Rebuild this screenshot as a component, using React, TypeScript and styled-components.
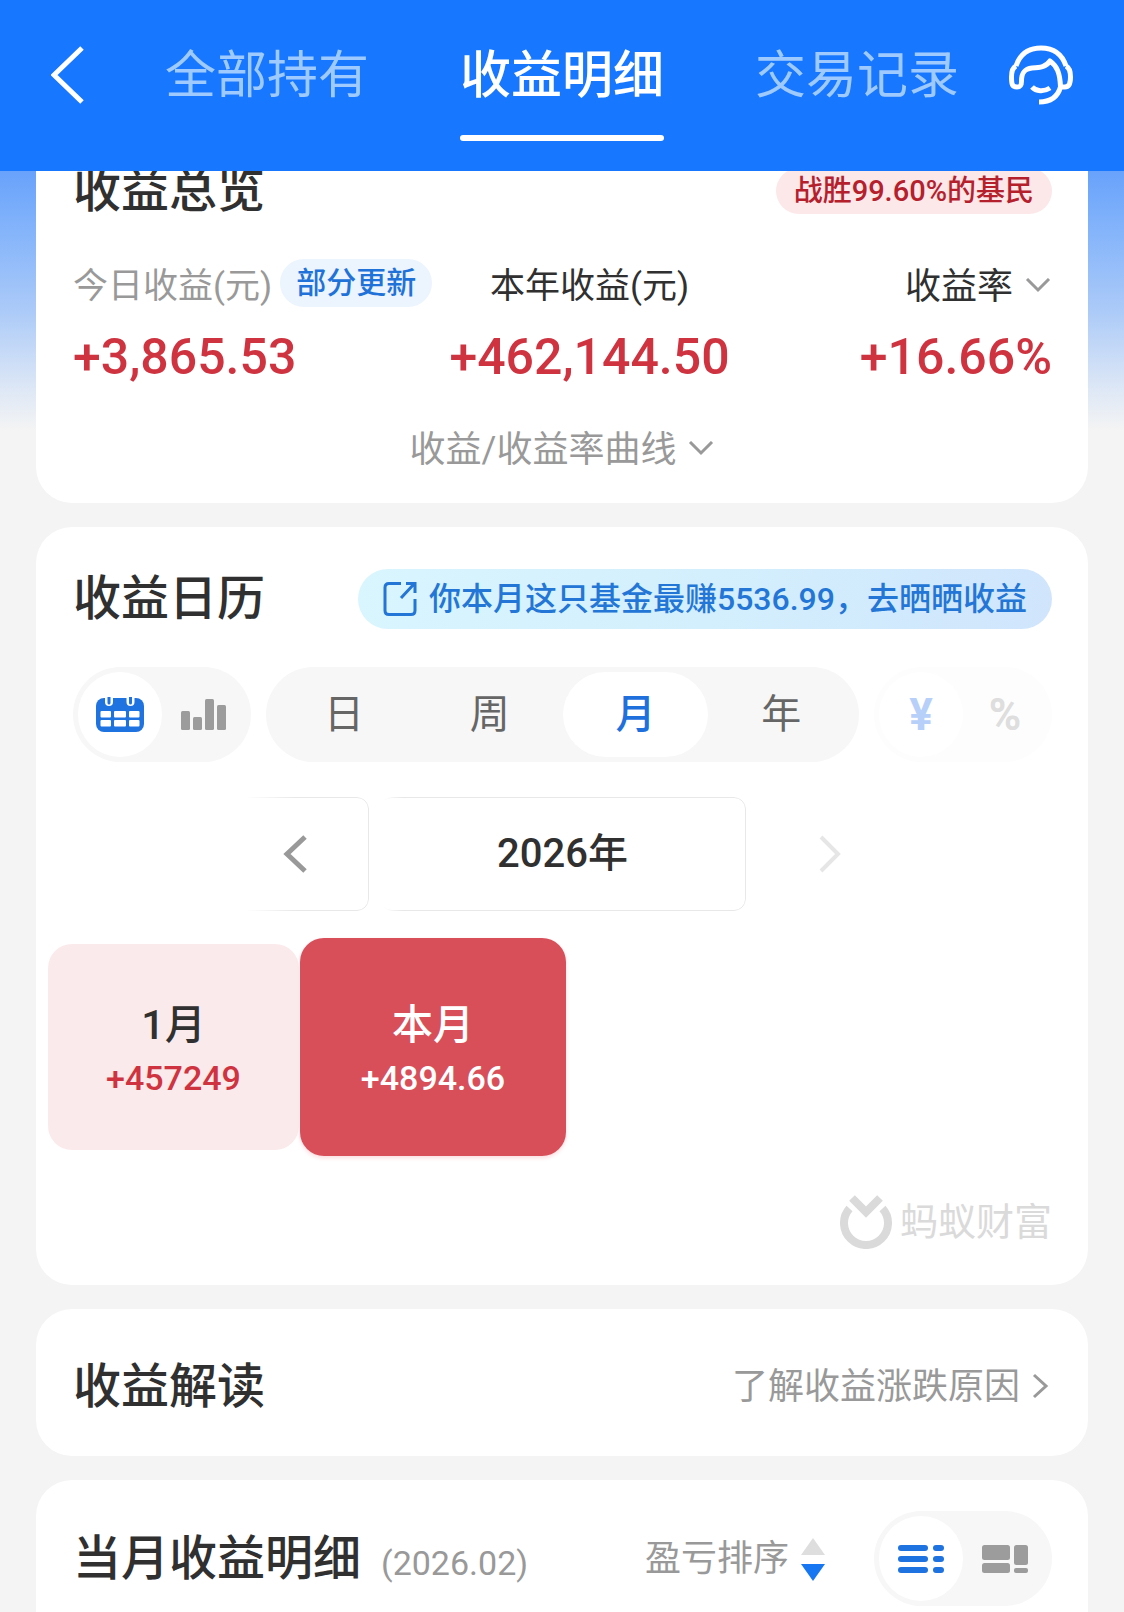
import React, { useState } from "react";
import styled, { createGlobalStyle, css } from "styled-components";

const GlobalStyle = createGlobalStyle`
  *, *::before, *::after { box-sizing: border-box; }
  body {
    margin: 0;
    background: #f4f4f4;
    color: #303030;
    font-family: Roboto, "Noto Sans CJK SC", sans-serif;
  }
  h2, p { margin: 0; }
  button {
    margin: 0;
    padding: 0;
    border: 0;
    background: none;
    color: inherit;
    font: inherit;
    cursor: pointer;
  }
  svg { display: block; flex: none; }
`;

const Page = styled.div`
  display: flex;
  flex-direction: column;
  min-height: 100vh;
  background: linear-gradient(
    to bottom,
    #68a2fb 171px,
    #7fb1fb 220px,
    #abcaf8 310px,
    #dbe6f6 385px,
    #f4f4f4 430px
  );
`;

const Header = styled.header`
  position: sticky;
  top: 0;
  z-index: 1;
  display: flex;
  justify-content: space-between;
  padding: 40px 51px 30px;
  background: #1777ff;
  color: #fff;
`;

const HeaderButton = styled.button`
  display: flex;
  align-items: center;
  width: 64px;
  height: 70px;
`;

const Tabs = styled.nav`
  display: flex;
  gap: 91px;
`;

const Tab = styled.button<{ $active: boolean }>`
  padding-bottom: 23px;
  border-bottom: 6px solid transparent;
  color: #9fcaff;
  font-size: 51px;
  line-height: 72px;
  white-space: nowrap;

  ${({ $active }) =>
    $active &&
    css`
      color: #fff;
      font-weight: 500;

      &::after {
        content: "";
        display: block;
        height: 6px;
        margin: 23px 0 -29px;
        border-radius: 3px;
        background: #fff;
      }
    `}
`;

const Main = styled.main`
  display: flex;
  flex: 1;
  flex-direction: column;
  gap: 24px;
  margin-top: -52px;
  padding: 0 36px;
`;

const Card = styled.section`
  padding: 42px 36px 29px 37px;
  border-radius: 36px;
  background: #fff;
`;

const CalendarCard = styled(Card)`
  padding-bottom: 36px;
`;

const InsightCard = styled(Card)`
  padding-top: 48px;
  padding-bottom: 39px;
`;

const DetailCard = styled(Card)`
  flex: 1;
  padding-top: 31px;
  padding-bottom: 0;
  border-radius: 36px 36px 0 0;
`;

const Row = styled.div`
  display: flex;
  align-items: center;
  justify-content: space-between;
`;

const Title = styled.h2`
  font-size: 48px;
  font-weight: 500;
  line-height: 60px;
  white-space: nowrap;
`;

const BeatBadge = styled.span`
  padding: 0 18px;
  border-radius: 23px;
  background: #fce7e9;
  color: #b5202d;
  font-size: 29px;
  font-weight: 500;
  line-height: 46px;
  white-space: nowrap;
`;

const Stats = styled.div`
  display: grid;
  grid-template-columns: 364fr 304fr 310fr;
  margin-top: 38px;
`;

const Stat = styled.div<{ $align: string }>`
  display: flex;
  flex-direction: column;
  align-items: ${({ $align }) => $align};
  gap: 14px;
`;

const StatHead = styled.div`
  display: flex;
  align-items: flex-start;
  gap: 8px;
  height: 54px;
`;

const StatLabel = styled.span<{ $muted?: boolean }>`
  color: ${({ $muted }) => ($muted ? "#999" : "#303030")};
  font-size: 35px;
  line-height: 56px;
  white-space: nowrap;
`;

const UpdateBadge = styled.span`
  padding: 0 16px;
  border-radius: 24px;
  background: #ecf4fe;
  color: #2172d8;
  font-size: 30px;
  font-weight: 500;
  line-height: 48px;
  white-space: nowrap;
`;

const StatValue = styled.p`
  color: #cf3340;
  font-size: 50px;
  font-weight: 500;
  line-height: 60px;
`;

const TextButton = styled.button`
  display: flex;
  align-items: center;
  gap: 12px;
  color: #999;
  font-size: 36px;
  line-height: 48px;
  white-space: nowrap;
`;

const RateButton = styled(TextButton)`
  color: #303030;
  line-height: 56px;
`;

const CurveButton = styled(TextButton)`
  margin: 39px auto 0;
`;

const ShareButton = styled.button`
  display: flex;
  align-items: center;
  gap: 12px;
  height: 60px;
  padding: 0 25px;
  border-radius: 30px;
  background: linear-gradient(100deg, #d9f5fe, #d3effd 50%, #d0e5fc);
  color: #2376d6;
  font-size: 32px;
  font-weight: 500;
  line-height: 60px;
  white-space: nowrap;
`;

const Controls = styled.div`
  display: flex;
  gap: 15px;
  margin-top: 38px;
`;

const Segment = styled.div<{ $grow?: boolean; $faded?: boolean }>`
  display: flex;
  flex: ${({ $grow }) => ($grow ? "1" : "0 0 178px")};
  height: 95px;
  padding: 5px;
  border-radius: 48px;
  background: ${({ $faded }) => ($faded ? "#fdfdfd" : "#f7f7f7")};
`;

const SegmentItem = styled.button<{ $active: boolean }>`
  display: flex;
  flex: 1;
  align-items: center;
  justify-content: center;
  border-radius: 43px;
  background: ${({ $active }) => ($active ? "#fff" : "transparent")};
  color: ${({ $active }) => ($active ? "#1f70dc" : "#666")};
  font-size: 40px;
  font-weight: ${({ $active }) => ($active ? 500 : 400)};
  line-height: 56px;

  & > svg {
    color: ${({ $active }) => ($active ? "#1f73e0" : "#9c9c9c")};
  }
`;

const UnitItem = styled(SegmentItem)`
  color: ${({ $active }) => ($active ? "#b7d0fa" : "#dedede")};
  font-size: 44px;
  font-weight: 700;
`;

const YearNav = styled.div`
  display: flex;
  justify-content: center;
  gap: 11px;
  margin-top: 35px;
`;

const YearBox = styled.div<{ $width: number; $fade?: string }>`
  position: relative;
  display: flex;
  width: ${({ $width }) => $width}px;
  height: 114px;

  &::before {
    content: "";
    position: absolute;
    inset: 0;
    display: ${({ $fade }) => ($fade ? "block" : "none")};
    border: 1px solid #e8e8e8;
    border-radius: 12px;
    mask-image: linear-gradient(to right, ${({ $fade }) => $fade});
    pointer-events: none;
  }
`;

const YearButton = styled.button`
  display: flex;
  flex: 1;
  align-items: center;
  justify-content: center;
  color: #303030;
  font-size: 40px;
  font-weight: 500;
  line-height: 56px;

  &:disabled { cursor: default; }
`;

const Months = styled.div`
  display: grid;
  grid-template-columns: repeat(4, 1fr);
  margin: 27px -30px 0 -31px;
`;

const Month = styled.button<{ $active: boolean }>`
  display: flex;
  flex-direction: column;
  align-items: center;
  justify-content: center;
  height: ${({ $active }) => ($active ? 218 : 206)}px;
  margin: ${({ $active }) => ($active ? "0 -4px 0 -2px" : "6px 3px 6px 6px")};
  padding-top: 4px;
  border-radius: 24px;
  background: ${({ $active }) => ($active ? "#d84f5a" : "#fbeaeb")};
  box-shadow: ${({ $active }) => ($active ? "0 2px 4px #fbdcdf" : "none")};
  color: ${({ $active }) => ($active ? "#fff" : "#303030")};
`;

const MonthName = styled.span`
  font-size: 41px;
  font-weight: 500;
  line-height: 58px;
`;

const MonthAmount = styled.span<{ $active: boolean }>`
  color: ${({ $active }) => ($active ? "#fff" : "#cf3340")};
  font-size: 34px;
  font-weight: 500;
  line-height: 48px;
`;

const Brand = styled.div`
  display: flex;
  align-items: center;
  justify-content: flex-end;
  gap: 8px;
  margin-top: 39px;
  color: #dadada;
  font-size: 38px;
  line-height: 54px;
`;

const DetailRow = styled.div`
  display: flex;
  align-items: center;
`;

const DetailHeading = styled.div`
  display: flex;
  align-items: baseline;
  gap: 20px;
  margin-right: auto;
`;

const Period = styled.span`
  color: #999;
  font-size: 34px;
  line-height: 48px;
`;

const SortButton = styled(TextButton)`
  margin-right: 49px;
`;

const chevrons = {
  down: { w: 27, h: 18, d: "M2 1 L13 12 L24 1" },
  left: { w: 26, h: 38, d: "M22 2 L4 19 L22 36" },
  right: { w: 24, h: 38, d: "M3 2 L20 19 L3 36" },
  back: { w: 34, h: 58, d: "M31 2 L3 29 L31 56" },
  more: { w: 20, h: 28, d: "M2 2 L14 13 L2 24" },
};

function Chevron({ kind, color, stroke = 3 }: { kind: keyof typeof chevrons; color: string; stroke?: number }) {
  const { w, h, d } = chevrons[kind];
  return (
    <svg width={w} height={h} viewBox={`0 0 ${w} ${h}`} fill="none" stroke={color} strokeWidth={stroke} aria-hidden="true">
      <path d={d} />
    </svg>
  );
}

function HeadsetIcon() {
  return (
    <svg width="64" height="60" viewBox="0 0 64 60" fill="none" stroke="#fff" strokeWidth="5" strokeLinejoin="round" aria-hidden="true">
      <path d="M7 21 C11 9 20 3 32 3 C44 3 53 9 57 21" />
      <path d="M7 21 C3 23 2.500 27 2.500 32 C2.500 39 3 42 8 42 C12 42 12.500 40 12.500 36 C12.500 28 15 24 23 23 C31 22.500 37 22 41 16 C48 21 51 28 51.500 42" />
      <path d="M57 21 C61 23 61.500 27 61.500 32 C61.500 39 60 42 56 42 L51.500 42 C49 51 42 57 30 57" />
      <path d="M23 42 C27 46.500 35 47 41 43" />
    </svg>
  );
}

function ShareIcon() {
  return (
    <svg width="34" height="36" viewBox="0 0 34 36" fill="none" stroke="currentColor" strokeWidth="3" aria-hidden="true">
      <path d="M18 2.500 H6 Q2 2.500 2 6.500 V29.500 Q2 33.500 6 33.500 H28 Q32 33.500 32 29.500 V18" />
      <path d="M18 17 L31 3 M23 2.500 H32 V12" />
    </svg>
  );
}

function CalendarIcon() {
  return (
    <svg width="48" height="36" viewBox="0 0 48 36" aria-hidden="true">
      <rect y="1" width="48" height="34" rx="8" fill="currentColor" />
      {[13, 34.5].map((x) => (
        <g key={x}>
          <path d={`M${x - 4} 0 V5 a4 4 0 0 0 8 0 V0`} fill="#fff" />
          <path d={`M${x} 0 V6`} stroke="currentColor" strokeWidth="3" strokeLinecap="round" />
        </g>
      ))}
      {[14, 23].map((y) => [4.5, 18, 33].map((x) => <rect key={`${x}-${y}`} x={x} y={y} width={x === 18 ? 12 : 10.5} height="6.500" rx="1" fill="#fff" />))}
    </svg>
  );
}

function BarsIcon() {
  return (
    <svg width="46" height="31" viewBox="0 0 46 31" fill="currentColor" aria-hidden="true">
      <rect y="12" width="9" height="19" rx="1.500" />
      <rect x="12" y="18" width="9" height="13" rx="1.500" />
      <rect x="24" width="9" height="31" rx="1.500" />
      <rect x="36" y="6" width="9" height="25" rx="1.500" />
    </svg>
  );
}

function ListIcon() {
  return (
    <svg width="46" height="28" viewBox="0 0 46 28" fill="currentColor" aria-hidden="true">
      {[0, 11, 22].map((y) => (
        <g key={y}>
          <rect y={y} width="30" height="6" rx="3" />
          <rect x="35" y={y} width="11" height="6" rx="3" />
        </g>
      ))}
    </svg>
  );
}

function TilesIcon() {
  return (
    <svg width="46" height="28" viewBox="0 0 46 28" fill="currentColor" aria-hidden="true">
      <rect width="28" height="15" rx="2.500" />
      <rect y="18" width="28" height="10" rx="2.500" />
      <rect x="32" width="14" height="20" rx="2.500" />
      <rect x="32" y="23" width="14" height="5" rx="2" />
    </svg>
  );
}

function SortIcon() {
  return (
    <svg width="24" height="44" viewBox="0 0 24 44" aria-hidden="true">
      <path d="M12 1 L24 18 H0 Z" fill="#dedede" />
      <path d="M0 27 H24 L12 44 Z" fill="#1777f2" />
    </svg>
  );
}

function BrandIcon() {
  return (
    <svg width="52" height="54" viewBox="0 0 52 54" fill="none" stroke="currentColor" strokeWidth="8" aria-hidden="true">
      <path d="M9.500 13.500 A22 22 0 1 0 42.500 13.500" />
      <path d="M12 3 L26 17 L40 3" />
    </svg>
  );
}

const tabs = ["全部持有", "收益明细", "交易记录"];
const periods = ["日", "周", "月", "年"];
const months = [
  { name: "1月", amount: "+457249" },
  { name: "本月", amount: "+4894.66" },
];

export default function App() {
  const [tab, setTab] = useState("收益明细");
  const [period, setPeriod] = useState("月");
  const [month, setMonth] = useState("本月");
  const [view, setView] = useState("calendar");
  const [layout, setLayout] = useState("list");

  return (
    <Page>
      <GlobalStyle />
      <Header>
        <HeaderButton aria-label="返回">
          <Chevron kind="back" color="#fff" stroke={5} />
        </HeaderButton>
        <Tabs>
          {tabs.map((name) => (
            <Tab key={name} $active={name === tab} onClick={() => setTab(name)}>
              {name}
            </Tab>
          ))}
        </Tabs>
        <HeaderButton aria-label="客服">
          <HeadsetIcon />
        </HeaderButton>
      </Header>

      <Main>
        <Card>
          <Row>
            <Title>收益总览</Title>
            <BeatBadge>战胜99.60%的基民</BeatBadge>
          </Row>
          <Stats>
            <Stat $align="flex-start">
              <StatHead>
                <StatLabel $muted>今日收益(元)</StatLabel>
                <UpdateBadge>部分更新</UpdateBadge>
              </StatHead>
              <StatValue>+3,865.53</StatValue>
            </Stat>
            <Stat $align="center">
              <StatHead>
                <StatLabel>本年收益(元)</StatLabel>
              </StatHead>
              <StatValue>+462,144.50</StatValue>
            </Stat>
            <Stat $align="flex-end">
              <StatHead>
                <RateButton aria-haspopup="listbox">
                  收益率
                  <Chevron kind="down" color="#999" />
                </RateButton>
              </StatHead>
              <StatValue>+16.66%</StatValue>
            </Stat>
          </Stats>
          <CurveButton aria-expanded="false">
            收益/收益率曲线
            <Chevron kind="down" color="#999" />
          </CurveButton>
        </Card>

        <CalendarCard>
          <Row>
            <Title>收益日历</Title>
            <ShareButton>
              <ShareIcon />
              你本月这只基金最赚5536.99，去晒晒收益
            </ShareButton>
          </Row>
          <Controls>
            <Segment>
              <SegmentItem $active={view === "calendar"} aria-label="日历" onClick={() => setView("calendar")}>
                <CalendarIcon />
              </SegmentItem>
              <SegmentItem $active={view === "chart"} aria-label="柱状图" onClick={() => setView("chart")}>
                <BarsIcon />
              </SegmentItem>
            </Segment>
            <Segment $grow>
              {periods.map((name) => (
                <SegmentItem key={name} $active={name === period} onClick={() => setPeriod(name)}>
                  {name}
                </SegmentItem>
              ))}
            </Segment>
            <Segment $faded>
              <UnitItem $active>¥</UnitItem>
              <UnitItem $active={false}>%</UnitItem>
            </Segment>
          </Controls>
          <YearNav>
            <YearBox $width={146} $fade="transparent 15%, #000 50%">
              <YearButton aria-label="上一年">
                <Chevron kind="left" color="#999" stroke={5} />
              </YearButton>
            </YearBox>
            <YearBox $width={366} $fade="transparent 1%, #000 6%">
              <YearButton>2026年</YearButton>
            </YearBox>
            <YearBox $width={146}>
              <YearButton aria-label="下一年" disabled>
                <Chevron kind="right" color="#e6e6e6" stroke={4} />
              </YearButton>
            </YearBox>
          </YearNav>
          <Months>
            {months.map(({ name, amount }) => (
              <Month key={name} $active={name === month} onClick={() => setMonth(name)}>
                <MonthName>{name}</MonthName>
                <MonthAmount $active={name === month}>{amount}</MonthAmount>
              </Month>
            ))}
          </Months>
          <Brand>
            <BrandIcon />
            蚂蚁财富
          </Brand>
        </CalendarCard>

        <InsightCard>
          <Row>
            <Title>收益解读</Title>
            <TextButton>
              了解收益涨跌原因
              <Chevron kind="more" color="#999" />
            </TextButton>
          </Row>
        </InsightCard>

        <DetailCard>
          <DetailRow>
            <DetailHeading>
              <Title>当月收益明细</Title>
              <Period>(2026.02)</Period>
            </DetailHeading>
            <SortButton>
              盈亏排序
              <SortIcon />
            </SortButton>
            <Segment>
              <SegmentItem $active={layout === "list"} aria-label="列表" onClick={() => setLayout("list")}>
                <ListIcon />
              </SegmentItem>
              <SegmentItem $active={layout === "tiles"} aria-label="卡片" onClick={() => setLayout("tiles")}>
                <TilesIcon />
              </SegmentItem>
            </Segment>
          </DetailRow>
        </DetailCard>
      </Main>
    </Page>
  );
}
